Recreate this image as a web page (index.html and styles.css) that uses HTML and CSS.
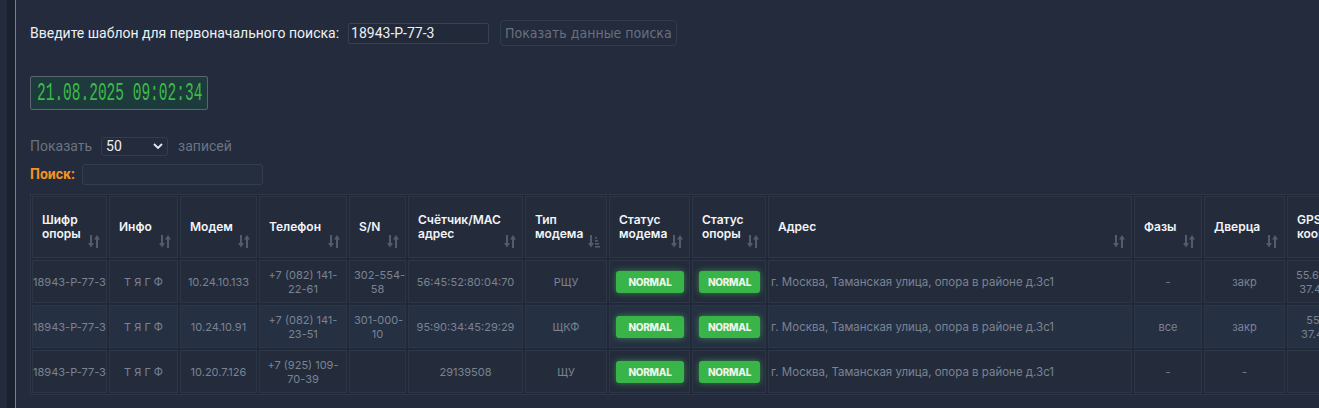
FILE: index.html
```html
<!DOCTYPE html>
<html lang="ru">
<head>
<meta charset="utf-8">
<title>Опоры</title>
<link rel="stylesheet" href="styles.css">
</head>
<body>
<div class="page">
  <div class="rail"></div>
  <main class="content">
    <div class="search-row">
      <label class="lbl" for="tpl">Введите шаблон для первоначального поиска:</label>
      <input id="tpl" class="tpl-input" type="text" value="18943-P-77-3">
      <button class="btn" type="button">Показать данные поиска</button>
    </div>

    <div class="clock"><span class="digits">21.08.2025 09:02:34</span></div>

    <div class="length">
      <span>Показать</span>
      <span class="select"><span>50</span><svg class="chev" viewBox="0 0 10 6" width="10" height="6"><path d="M1 1l4 4 4-4" fill="none" stroke="#e6e9ee" stroke-width="1.8"/></svg></span>
      <span>записей</span>
    </div>
    <div class="filter">
      <span class="filter-lbl">Поиск:</span>
      <span class="filter-input"></span>
    </div>

    <div class="table-wrap">
      <table class="grid">
        <colgroup>
          <col class="c1"><col class="c2"><col class="c3"><col class="c4"><col class="c5"><col class="c6"><col class="c7"><col class="c8"><col class="c9"><col class="c10"><col class="c11"><col class="c12"><col class="c13">
        </colgroup>
        <thead>
          <tr>
            <th>Шифр<br>опоры<i class="sort"><svg viewBox="0 0 12 13"><rect x="2" y="0" width="2" height="9"/><polygon points="0,8 6,8 3,12.5"/><polygon points="6,4.5 12,4.5 9,0"/><rect x="8" y="3" width="2" height="10"/></svg></i></th>
            <th>Инфо<i class="sort"><svg viewBox="0 0 12 13"><rect x="2" y="0" width="2" height="9"/><polygon points="0,8 6,8 3,12.5"/><polygon points="6,4.5 12,4.5 9,0"/><rect x="8" y="3" width="2" height="10"/></svg></i></th>
            <th>Модем<i class="sort"><svg viewBox="0 0 12 13"><rect x="2" y="0" width="2" height="9"/><polygon points="0,8 6,8 3,12.5"/><polygon points="6,4.5 12,4.5 9,0"/><rect x="8" y="3" width="2" height="10"/></svg></i></th>
            <th>Телефон<i class="sort"><svg viewBox="0 0 12 13"><rect x="2" y="0" width="2" height="9"/><polygon points="0,8 6,8 3,12.5"/><polygon points="6,4.5 12,4.5 9,0"/><rect x="8" y="3" width="2" height="10"/></svg></i></th>
            <th>S/N<i class="sort"><svg viewBox="0 0 12 13"><rect x="2" y="0" width="2" height="9"/><polygon points="0,8 6,8 3,12.5"/><polygon points="6,4.5 12,4.5 9,0"/><rect x="8" y="3" width="2" height="10"/></svg></i></th>
            <th>Счётчик/MAC<br>адрес<i class="sort"><svg viewBox="0 0 12 13"><rect x="2" y="0" width="2" height="9"/><polygon points="0,8 6,8 3,12.5"/><polygon points="6,4.5 12,4.5 9,0"/><rect x="8" y="3" width="2" height="10"/></svg></i></th>
            <th>Тип<br>модема<i class="sort"><svg viewBox="0 0 12 13"><rect x="2" y="0" width="2" height="9"/><polygon points="0,8 6,8 3,12.5"/><rect x="7" y="2" width="2" height="1.6"/><rect x="7" y="5" width="3" height="1.6"/><rect x="7" y="8" width="4" height="1.6"/><rect x="7" y="11" width="5" height="1.6"/></svg></i></th>
            <th>Статус<br>модема<i class="sort"><svg viewBox="0 0 12 13"><rect x="2" y="0" width="2" height="9"/><polygon points="0,8 6,8 3,12.5"/><polygon points="6,4.5 12,4.5 9,0"/><rect x="8" y="3" width="2" height="10"/></svg></i></th>
            <th>Статус<br>опоры<i class="sort"><svg viewBox="0 0 12 13"><rect x="2" y="0" width="2" height="9"/><polygon points="0,8 6,8 3,12.5"/><polygon points="6,4.5 12,4.5 9,0"/><rect x="8" y="3" width="2" height="10"/></svg></i></th>
            <th>Адрес<i class="sort"><svg viewBox="0 0 12 13"><rect x="2" y="0" width="2" height="9"/><polygon points="0,8 6,8 3,12.5"/><polygon points="6,4.5 12,4.5 9,0"/><rect x="8" y="3" width="2" height="10"/></svg></i></th>
            <th>Фазы<i class="sort"><svg viewBox="0 0 12 13"><rect x="2" y="0" width="2" height="9"/><polygon points="0,8 6,8 3,12.5"/><polygon points="6,4.5 12,4.5 9,0"/><rect x="8" y="3" width="2" height="10"/></svg></i></th>
            <th>Дверца<i class="sort"><svg viewBox="0 0 12 13"><rect x="2" y="0" width="2" height="9"/><polygon points="0,8 6,8 3,12.5"/><polygon points="6,4.5 12,4.5 9,0"/><rect x="8" y="3" width="2" height="10"/></svg></i></th>
            <th>GPS<br>координаты<i class="sort"><svg viewBox="0 0 12 13"><rect x="2" y="0" width="2" height="9"/><polygon points="0,8 6,8 3,12.5"/><polygon points="6,4.5 12,4.5 9,0"/><rect x="8" y="3" width="2" height="10"/></svg></i></th>
          </tr>
        </thead>
        <tbody>
          <tr>
            <td>18943-P-77-3</td>
            <td>Т Я Г Ф</td>
            <td>10.24.10.133</td>
            <td>+7 (082) 141-<br>22-61</td>
            <td>302-554-<br>58</td>
            <td>56:45:52:80:04:70</td>
            <td>РЩУ</td>
            <td><span class="badge">NORMAL</span></td>
            <td><span class="badge">NORMAL</span></td>
            <td class="addr">г. Москва, Таманская улица, опора в районе д.3с1</td>
            <td>-</td>
            <td>закр</td>
            <td>55.654838,<br>37.459214</td>
          </tr>
          <tr class="alt">
            <td>18943-P-77-3</td>
            <td>Т Я Г Ф</td>
            <td>10.24.10.91</td>
            <td>+7 (082) 141-<br>23-51</td>
            <td>301-000-<br>10</td>
            <td>95:90:34:45:29:29</td>
            <td>ЩКФ</td>
            <td><span class="badge">NORMAL</span></td>
            <td><span class="badge">NORMAL</span></td>
            <td class="addr">г. Москва, Таманская улица, опора в районе д.3с1</td>
            <td>все</td>
            <td>закр</td>
            <td>55.654,<br>37.45921,</td>
          </tr>
          <tr>
            <td>18943-P-77-3</td>
            <td>Т Я Г Ф</td>
            <td>10.20.7.126</td>
            <td>+7 (925) 109-<br>70-39</td>
            <td></td>
            <td>29139508</td>
            <td>ЩУ</td>
            <td><span class="badge">NORMAL</span></td>
            <td><span class="badge">NORMAL</span></td>
            <td class="addr">г. Москва, Таманская улица, опора в районе д.3с1</td>
            <td>-</td>
            <td>-</td>
            <td></td>
          </tr>
        </tbody>
      </table>
    </div>
  </main>
</div>
</body>
</html>
```

FILE: styles.css
```css
* { box-sizing: border-box; }
html, body { margin: 0; padding: 0; }
body {
  background: #232b3c;
  font-family: Roboto, "Liberation Sans", sans-serif;
  color: #e6e9ee;
  overflow: hidden;
  height: 408px;
}
.page {
  display: flex;
  height: 408px;
}
.rail {
  flex: 0 0 auto;
  width: 9px;
  margin-left: 7px;
  background: #1b212c;
  border-right: 1px solid #2196f3;
}
.content {
  flex: 1 1 auto;
  min-width: 0;
  overflow: hidden;
  padding-left: 14px;
}
.search-row {
  display: flex;
  align-items: center;
  margin-top: 20px;
  height: 26px;
}
.lbl {
  font-size: 14px;
  color: #eef0f3;
}
.tpl-input {
  margin-left: 9px;
  width: 141px;
  height: 21px;
  background: #222a3a;
  border: 1px solid #364152;
  border-radius: 2px;
  color: #eef0f3;
  font-family: Roboto, "Liberation Sans", sans-serif;
  font-size: 14px;
  padding: 0 2px;
  outline: none;
}
.btn {
  margin-left: 11px;
  height: 26px;
  padding: 0 4px;
  background: #232b3c;
  border: 1px solid #323c4c;
  border-radius: 4px;
  color: #68717f;
  font-family: "DejaVu Sans Condensed", "Liberation Sans", sans-serif;
  font-size: 14px;
}
.clock {
  margin-top: 30px;
  width: 178px;
  height: 34px;
  background: #1d3b3d;
  border: 1px solid #5d666f;
  border-radius: 2px;
  overflow: hidden;
  display: flex;
  align-items: center;
  padding-left: 6px;
}
.digits {
  display: block;
  color: #3cbc47;
  font-family: "Liberation Mono", monospace;
  font-size: 14.5px;
  line-height: 14px;
  white-space: nowrap;
  transform: scaleY(1.75);
  transform-origin: left center;
  letter-spacing: 0;
}
.length {
  margin-top: 26px;
  display: flex;
  align-items: center;
  font-size: 14px;
  color: #6a7383;
  height: 20px;
}
.select {
  display: flex;
  align-items: center;
  justify-content: space-between;
  margin: 0 10px 0 9px;
  width: 67px;
  height: 19px;
  border: 1px solid #333d4d;
  border-radius: 3px;
  padding: 0 4px;
  color: #eef0f3;
  font-size: 14px;
}
.filter {
  margin-top: 7px;
  display: flex;
  align-items: center;
  gap: 7px;
  height: 22px;
}
.filter-lbl {
  color: #f39323;
  font-weight: 700;
  font-size: 14px;
}
.filter-input {
  width: 181px;
  height: 21px;
  border: 1px solid #333d4d;
  border-radius: 3px;
  background: #252e3f;
}
.table-wrap {
  margin-top: 9px;
  width: max-content;
  border: 1px solid #2e3747;
  background: #212938;
}
.grid {
  table-layout: fixed;
  border-collapse: separate;
  border-spacing: 2px;
  margin: -1px;
  width: 1337px;
  font-family: Inter, Roboto, sans-serif;
  font-size: 11px;
}
.c1 { width: 75px; } .c2 { width: 69px; } .c3 { width: 77px; } .c4 { width: 88px; }
.c5 { width: 57px; } .c6 { width: 115px; } .c7 { width: 82px; } .c8 { width: 81px; }
.c9 { width: 74px; } .c10 { width: 364px; } .c11 { width: 68px; } .c12 { width: 81px; }
.c13 { width: 78px; }
.grid th, .grid td {
  border: 1px solid #2d3646;
  background: #242c3c;
}
.grid th {
  position: relative;
  height: 62px;
  text-align: left;
  vertical-align: middle;
  padding: 0 18px 0 9px;
  color: #f2f4f7;
  font-weight: 600;
  font-size: 12px;
  line-height: 14px;
  white-space: nowrap;
  overflow: hidden;
}
.sort {
  position: absolute;
  right: 6px;
  bottom: 9px;
  width: 12px;
  height: 13px;
}
.sort svg {
  display: block;
  width: 12px;
  height: 13px;
  fill: #535c6b;
}
.grid td {
  height: 43px;
  text-align: center;
  vertical-align: middle;
  color: #7a8393;
  line-height: 14px;
  padding: 0 4px;
  white-space: nowrap;
  overflow: hidden;
}
.grid td:first-child { padding: 0; }
.grid tr.alt td { background: #263043; }
.grid td.addr {
  text-align: left;
  font-size: 11.5px;
  padding-left: 2px;
}
.badge {
  display: block;
  height: 22px;
  line-height: 22px;
  background: #38b449;
  border-radius: 3px;
  color: #eef6ea;
  font-weight: 800;
  font-size: 10px;
  letter-spacing: -0.3px;
  box-shadow: 0 0 6px rgba(68, 210, 80, 0.55);
  margin: 0 1px 0 2px;
}
```
